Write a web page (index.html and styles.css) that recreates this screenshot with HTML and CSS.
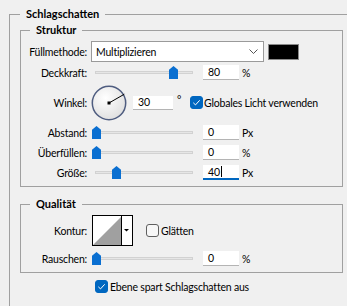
FILE: index.html
```html
<!DOCTYPE html>
<html lang="de">
<head>
    <meta charset="UTF-8">
    <title>Schlagschatten</title>
    <link rel="stylesheet" href="styles.css">
</head>
<body>
    <fieldset class="group outer">
        <legend>Schlagschatten</legend>

        <fieldset class="group inner">
            <legend>Struktur</legend>

            <div class="row row-blend">
                <span class="label">Füllmethode:</span>
                <div class="select">
                    <span>Multiplizieren</span>
                    <svg class="chevron" width="9" height="5" viewBox="0 0 9 5">
                        <polyline points="0.5,0.5 4.5,4.5 8.5,0.5" fill="none" stroke="#555" stroke-width="1"/>
                    </svg>
                </div>
                <span class="swatch"></span>
            </div>

            <div class="row row-slider">
                <span class="label">Deckkraft:</span>
                <div class="slider">
                    <span class="track"></span>
                    <span class="thumb" style="left: 78px"></span>
                </div>
                <span class="field">80</span>
                <span class="unit">%</span>
            </div>

            <div class="row row-angle">
                <span class="label">Winkel:</span>
                <svg class="dial" width="36" height="36" viewBox="0 0 36 36">
                    <defs>
                        <radialGradient id="dialFill" cx="40%" cy="35%" r="70%">
                            <stop offset="0" stop-color="#ffffff"/>
                            <stop offset="1" stop-color="#dedede"/>
                        </radialGradient>
                    </defs>
                    <circle cx="18" cy="18" r="16.7" fill="url(#dialFill)" stroke="#4f5d80" stroke-width="1.5"/>
                    <line x1="18" y1="18" x2="33.3" y2="9.2" stroke="#000" stroke-width="1"/>
                    <rect x="16.5" y="16.5" width="3" height="3" fill="#000"/>
                </svg>
                <span class="field field-angle">30</span>
                <span class="deg">°</span>
                <span class="checkbox checked">
                    <svg width="13" height="13" viewBox="0 0 13 13">
                        <polyline points="3.3,6.8 5.5,8.9 9.7,4.3" fill="none" stroke="#fff" stroke-width="1"/>
                    </svg>
                </span>
                <span class="check-text">Globales Licht verwenden</span>
            </div>

            <div class="row row-slider">
                <span class="label">Abstand:</span>
                <div class="slider">
                    <span class="track"></span>
                    <span class="thumb" style="left: 1px"></span>
                </div>
                <span class="field">0</span>
                <span class="unit">Px</span>
            </div>

            <div class="row row-slider">
                <span class="label">Überfüllen:</span>
                <div class="slider">
                    <span class="track"></span>
                    <span class="thumb" style="left: 1px"></span>
                </div>
                <span class="field">0</span>
                <span class="unit">%</span>
            </div>

            <div class="row row-slider">
                <span class="label">Größe:</span>
                <div class="slider">
                    <span class="track"></span>
                    <span class="thumb" style="left: 21px"></span>
                </div>
                <span class="field focused">40<span class="caret"></span></span>
                <span class="unit">Px</span>
            </div>
        </fieldset>

        <fieldset class="group inner quality">
            <legend>Qualität</legend>

            <div class="row row-contour">
                <span class="label">Kontur:</span>
                <svg class="contour" width="41" height="31" viewBox="0 0 41 31">
                    <rect x="0.5" y="0.5" width="40" height="30" fill="#fff" stroke="#000"/>
                    <polygon points="1,30 29,2 29,30" fill="#a0a0a0"/>
                    <line x1="29.5" y1="0" x2="29.5" y2="31" stroke="#000"/>
                    <polygon points="32,14 37,14 34.5,16.5" fill="#000"/>
                </svg>
                <span class="checkbox"></span>
                <span class="check-text">Glätten</span>
            </div>

            <div class="row row-slider row-noise">
                <span class="label">Rauschen:</span>
                <div class="slider">
                    <span class="track"></span>
                    <span class="thumb" style="left: 1px"></span>
                </div>
                <span class="field">0</span>
                <span class="unit">%</span>
            </div>
        </fieldset>

        <div class="row row-knockout">
            <span class="checkbox checked">
                <svg width="13" height="13" viewBox="0 0 13 13">
                    <polyline points="3.3,6.8 5.5,8.9 9.7,4.3" fill="none" stroke="#fff" stroke-width="1"/>
                </svg>
            </span>
            <span class="check-text">Ebene spart Schlagschatten aus</span>
        </div>
    </fieldset>
</body>
</html>
```

FILE: styles.css
```css
:root {
    --bg-color: #f0f0f0;
    --line-color: #a0a0a0;
    --accent-color: #0a6fd1; /* slider thumbs */
    --check-color: #0067c0;
}

* {
    box-sizing: border-box;
}

body {
    margin: 0;
    height: 306px;
    overflow: hidden;
    background-color: var(--bg-color);
    font-family: Lato, "Liberation Sans", sans-serif;
    font-size: 10.5px;
    letter-spacing: -0.2px;
    color: #000;
}

/* group boxes */
.group {
    margin: 0;
    padding: 4px 0 6px 0;
    border: 1px solid var(--line-color);
    min-width: 0;
}

.group legend {
    margin-left: 9px;
    padding: 0 6px;
    font-size: 11px;
    font-weight: bold;
    letter-spacing: 0;
    line-height: 14px;
}

.outer {
    margin: 7px 0 0 9px;
    padding: 2px 0 13px 10px;
    border-right: none;
    border-bottom: none;
}

.outer > legend {
    margin-left: 0;
}

.inner {
    width: 323px;
}

.quality {
    margin-top: 10px;
}

/* rows */
.row {
    display: flex;
    align-items: center;
    line-height: 14px;
}

.label {
    flex-shrink: 0;
    width: 66px;
    margin-right: 4px;
    text-align: right;
}

.row-blend {
    height: 21px;
}

.row-slider {
    height: 15px;
    margin-top: 5px;
}

.row-blend + .row-slider {
    margin-top: 3px;
}

.row-angle {
    height: 35px;
    margin-top: 5px;
}

.select {
    display: flex;
    align-items: center;
    justify-content: space-between;
    width: 173px;
    height: 21px;
    padding: 0 5px 0 4px;
    background-color: #fff;
    border: 1px solid #9a9a9a;
}

.swatch {
    width: 31px;
    height: 16px;
    margin-left: 4px;
    background-color: #000;
    border: 1px solid #8a8a8a;
}

/* sliders */
.slider {
    position: relative;
    display: flex;
    align-items: center;
    width: 102px;
    height: 15px;
}

.track {
    width: 98px;
    height: 3px;
    margin-left: 4px;
    background-color: #e6e6e6;
    border: 1px solid #d2d2d2;
}

.thumb {
    position: absolute;
    top: 1px;
    width: 9px;
    height: 13px;
    background-color: var(--accent-color);
    clip-path: polygon(50% 0, 100% 28%, 100% 100%, 0 100%, 0 28%);
}

/* number fields */
.field {
    display: flex;
    align-items: center;
    width: 36px;
    height: 15px;
    margin-left: 10px;
    padding-left: 5px;
    background-color: #fff;
    border-bottom: 1px solid #b4b4b4;
}

.field.focused {
    border-bottom: 2px solid var(--check-color);
}

.caret {
    width: 1px;
    height: 11px;
    margin-left: 1px;
    background-color: #000;
}

.field-angle {
    width: 40px;
    height: 14px;
    margin-left: 6px;
}

.unit {
    margin-left: 3px;
}

.deg {
    width: 13px;
    margin-left: 4px;
    margin-top: -5px;
}

/* checkboxes */
.checkbox {
    flex-shrink: 0;
    width: 13px;
    height: 13px;
    border: 1px solid #5f5f5f;
    border-radius: 3px;
    background-color: #f7f7f7;
}

.checkbox.checked {
    border-color: var(--check-color);
    background-color: var(--check-color);
}

.checkbox svg {
    display: block;
    margin: -1px;
}

.check-text {
    margin-left: 1px;
}

/* quality */
.row-contour {
    height: 31px;
}

.contour {
    margin-left: 1px;
}

.row-contour .checkbox {
    margin-left: 13px;
}

.row-contour .check-text {
    margin-left: 2px;
}

.row-noise {
    margin-top: 5px;
}

.row-knockout {
    height: 13px;
    margin-top: 7px;
    margin-left: 75px;
}

.row-knockout .check-text {
    margin-left: 2px;
}
```
